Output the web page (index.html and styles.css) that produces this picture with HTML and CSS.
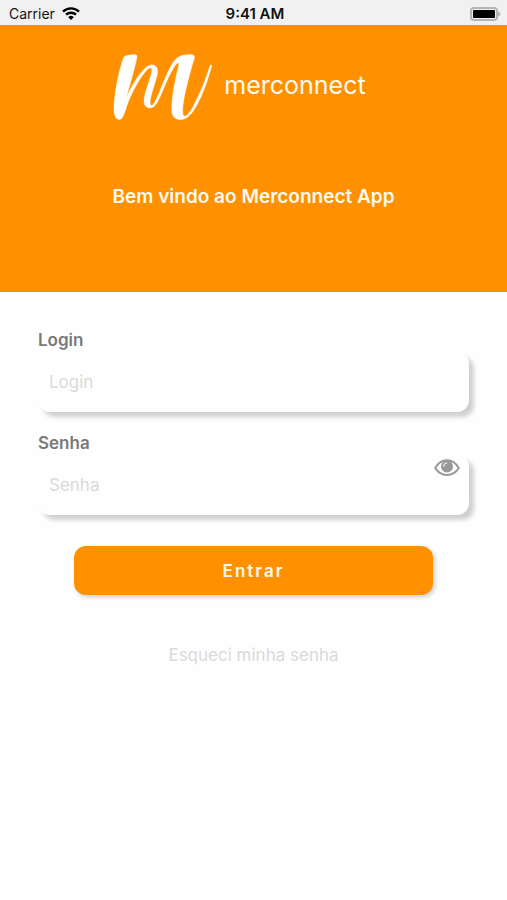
FILE: index.html
```html
<!DOCTYPE html>
<html lang="pt-BR">
  <head>
    <meta charset="UTF-8" />
    <meta name="viewport" content="width=device-width, initial-scale=1.0" />
    <title>Merconnect</title>
    <link rel="stylesheet" href="styles.css">
  </head>

  <body>
    <div class="status-bar">
      <div class="carrier">
        <span>Carrier</span>
        <svg class="wifi" viewBox="0 0 18 13" aria-hidden="true">
          <path d="M1 4.6a11.5 11.5 0 0 1 16 0" />
          <path d="M4 7.7a7.2 7.2 0 0 1 10 0" />
          <path class="dot" d="M9 13 6.2 10.2a4 4 0 0 1 5.6 0z" />
        </svg>
      </div>
      <span class="time">9:41 AM</span>
      <svg class="battery" viewBox="0 0 31 14" aria-hidden="true">
        <rect class="case" x="1" y="1" width="26" height="12" rx="3" />
        <rect x="3" y="3" width="22" height="8" rx="1" />
        <path class="cap" d="M28 4.5c1.6.6 2.4 1.4 2.4 2.5s-.8 1.9-2.4 2.5z" />
      </svg>
    </div>

    <header class="header">
      <div class="brand">
        <svg class="logo" viewBox="39 42 297 198" aria-hidden="true">
          <path d="M71 52C74 46 86 45 97 44C107 43 112 45 111 51C108 72 90 133 79 174C90 145 116 102 134 86C145 75 157 71 165 77C175 83 174 98 170 112C165 130 154 160 151 181C149 194 152 198 158 195C163 191 172 172 178 157C188 132 203 93 220 66C231 49 247 44 264 44C280 43 286 47 283 56C275 78 259 142 253 171C249 192 245 222 252 228C259 232 269 217 277 204C293 172 309 141 317 115C323 98 327 85 331 76C332 73 336 74 335 79C327 107 318 138 305 166C288 205 269 238 243 239C220 239 214 223 215 204C216 169 224 122 236 77C237 71 236 69 234 69C228 69 217 89 203 118C192 142 184 165 174 183C167 197 160 204 150 204C136 204 131 193 132 180C133 160 146 129 152 107C157 90 157 83 151 84C139 86 123 112 109 136C95 160 85 184 78 206C71 226 67 238 58 239C45 239 41 222 42 202C43 155 57 90 71 52Z" />
        </svg>
        <span class="brand-name">merconnect</span>
      </div>
      <h1 class="welcome">Bem vindo ao Merconnect App</h1>
    </header>

    <main>
      <form class="login-form">
        <div class="field">
          <label for="login">Login</label>
          <input type="text" id="login" placeholder="Login" />
        </div>
        <div class="field">
          <label for="senha">Senha</label>
          <div class="password">
            <input type="password" id="senha" placeholder="Senha" />
            <button type="button" class="eye" aria-label="Mostrar senha">
              <svg viewBox="0 0 26 18" aria-hidden="true">
                <path class="outline" d="M1.2 9C4 4.2 8 1.3 13 1.3S22 4.2 24.8 9C22 13.5 18 16 13 16S4 13.5 1.2 9z" />
                <circle cx="13" cy="7.5" r="6" />
                <path class="shine" d="M9.8 7.2c0-1.9 1.2-3.2 3-3.2" />
              </svg>
            </button>
          </div>
        </div>
        <button type="submit" class="enter">Entrar</button>
        <a href="#" class="forgot">Esqueci minha senha</a>
      </form>
    </main>

    <script>
      const senha = document.querySelector('#senha');

      document.querySelector('.eye').addEventListener('click', () => {
        senha.type = senha.type === 'password' ? 'text' : 'password';
      });
    </script>
  </body>
</html>
```
FILE: styles.css
```css
* {
  padding: 0;
  margin: 0;
  box-sizing: border-box;
}
body {
  min-height: 100vh;
  background-color: #fefefe;
  font-family: Inter, "Liberation Sans", sans-serif;
}
input,
button {
  border: none;
  font-family: inherit;
}

/* status bar */
.status-bar {
  display: grid;
  grid-template-columns: 1fr auto 1fr;
  align-items: center;
  height: 25px;
  padding: 2px 6px 0 9px;
  background-color: #f1f1f1;
  color: #111;
  font-size: 14px;
}
.carrier {
  display: flex;
  align-items: center;
  gap: 7px;
}
.wifi {
  width: 18px;
  height: 13px;
  fill: none;
  stroke: #000;
  stroke-width: 2.4;
}
.wifi .dot {
  fill: #000;
  stroke: none;
}
.time {
  font-size: 15px;
  font-weight: 600;
}
.battery {
  justify-self: end;
  width: 31px;
  height: 14px;
}
.battery .case {
  fill: none;
  stroke: #b4b4b4;
  stroke-width: 2;
}
.battery .cap {
  fill: #b4b4b4;
}

/* header */
.header {
  display: flex;
  flex-direction: column;
  align-items: center;
  gap: 65px;
  height: 267px;
  padding-top: 29px;
  background-color: #ff9100;
  color: #fffaf0;
}
.brand {
  display: flex;
  align-items: center;
  gap: 12px;
  padding-right: 28px;
}
.logo {
  width: 99px;
  height: 66px;
  overflow: visible;
  fill: #fff;
  stroke: #fff;
  stroke-width: 1;
}
.brand-name {
  font-size: 25px;
  line-height: 32px;
  padding-bottom: 4px;
}
.welcome {
  font-size: 19px;
  font-weight: 600;
  line-height: 24px;
}

/* form */
.login-form {
  display: flex;
  flex-direction: column;
  gap: 20px;
  padding: 37px 38px;
}
.field {
  display: flex;
  flex-direction: column;
  gap: 1px;
}
.field label {
  color: #7a7a7a;
  font-size: 17px;
  font-weight: 600;
  line-height: 22px;
}
.field input {
  width: 100%;
  height: 60px;
  padding: 0 11px;
  border-radius: 12px;
  background-color: #fefefe;
  box-shadow: 5px 5px 4px #d0d0d0;
  color: #7a7a7a;
  font-size: 17px;
  outline: none;
}
.field input::placeholder {
  color: #dadada;
}
.password {
  position: relative;
}
/* sits over the password input */
.eye {
  position: absolute;
  top: 4px;
  right: 9px;
  width: 26px;
  height: 18px;
  background: none;
  cursor: pointer;
}
.eye svg {
  display: block;
  width: 26px;
  height: 18px;
  fill: #999;
}
.eye .outline {
  fill: #fefefe;
  stroke: #999;
  stroke-width: 2;
}
.eye .shine {
  fill: none;
  stroke: #eee;
  stroke-width: 1.2;
  stroke-linecap: round;
}
.enter {
  height: 49px;
  margin: 11px 36px 0;
  border-radius: 12px;
  background-color: #ff9100;
  box-shadow: 2px 2px 4px #ccc;
  color: #fffaf0;
  font-size: 17px;
  font-weight: 600;
  letter-spacing: 2px;
  cursor: pointer;
}
.forgot {
  align-self: center;
  margin-top: 29px;
  color: #dadada;
  font-size: 17px;
  line-height: 22px;
  text-decoration: none;
}
```
